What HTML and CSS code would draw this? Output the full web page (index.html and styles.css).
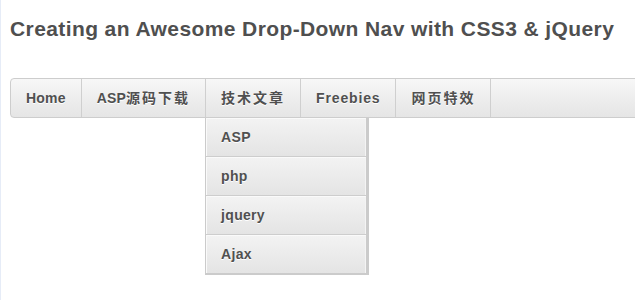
FILE: index.html
```
<!DOCTYPE html>
<html lang="zh-CN">
<head>
    <meta charset="UTF-8">
    <title>Creating an Awesome Drop-Down Nav with CSS3 &amp; jQuery</title>
    <link rel="stylesheet" href="styles.css">
</head>
<body>
    <h1>Creating an Awesome Drop-Down Nav with CSS3 &amp; jQuery</h1>

    <ul id="nav">
        <li><a href="#">Home</a></li>
        <li><a href="#">ASP<span class="cn">源码下载</span></a></li>
        <li class="open">
            <a href="#"><span class="cn">技术文章</span></a>
            <ul class="sub">
                <li><a href="#">ASP</a></li>
                <li><a href="#">php</a></li>
                <li><a href="#">jquery</a></li>
                <li><a href="#">Ajax</a></li>
            </ul>
        </li>
        <li><a href="#" class="wide">Freebies</a></li>
        <li><a href="#"><span class="cn">网页特效</span></a></li>
    </ul>
</body>
</html>
```

FILE: styles.css
```
html, body {
    margin: 0;
    padding: 0;
}

body {
    background: #fff;
    border-left: 1px solid #e6ecf7;
    overflow: hidden;
    height: 300px;
    box-sizing: border-box;
    font-family: "Liberation Sans", Arial, "Noto Sans CJK SC", sans-serif;
}

h1 {
    margin: 16px 0 0 9px;
    font-size: 21px;
    line-height: 26px;
    letter-spacing: 0.4px;
    font-weight: bold;
    color: #4f4f4f;
}

#nav {
    list-style: none;
    margin: 36px 0 0 9px;
    padding: 0;
    width: 900px;
    display: flex;
    border: 1px solid #cdcdcd;
    border-radius: 4px;
    background: linear-gradient(to bottom, #f7f7f7, #e5e5e5);
}

#nav > li {
    position: relative;
    border-right: 1px solid #cfcfcf;
}

#nav a {
    display: block;
    padding: 0 15px;
    line-height: 38px;
    font-size: 14px;
    font-weight: bold;
    letter-spacing: 0.2px;
    color: #505050;
    text-decoration: none;
    text-shadow: 0 1px 0 #fff;
}

#nav a.wide {
    letter-spacing: 0.85px;
}

#nav .cn {
    letter-spacing: 2px;
}

/* drop-down under the open item */
.sub {
    list-style: none;
    margin: 0;
    padding: 0;
    position: absolute;
    top: 39px;
    left: -1px;
    width: 160px;
    border: solid #cbcbcb;
    border-width: 0 3px 2px 1px;
}

.sub li {
    background: linear-gradient(to bottom, #f3f3f3, #e4e4e4);
    border-bottom: 1px solid #cdcdcd;
    box-shadow: inset 1px 1px 0 #fafafa, inset -1px 0 0 #f4f4f4;
}

.sub li:last-child {
    border-bottom: 0;
}

#nav .sub a {
    letter-spacing: 0.3px;
}
```
